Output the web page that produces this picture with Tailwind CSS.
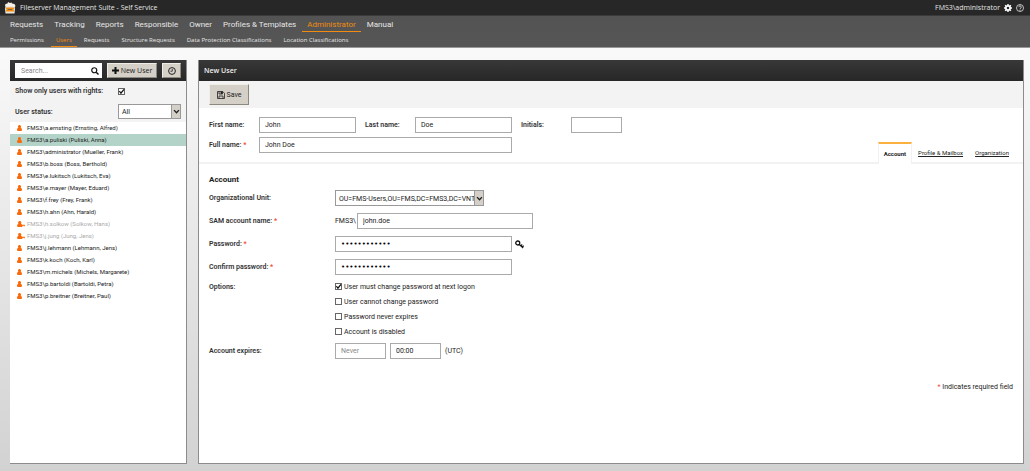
<!DOCTYPE html>
<html lang="en">
<head>
    <meta charset="UTF-8">
    <meta name="viewport" content="width=device-width, initial-scale=1.0">
    <title>Fileserver Management Suite - Self Service</title>
    <script src="https://cdn.jsdelivr.net/npm/@tailwindcss/browser@4"></script>
</head>
<body class="min-h-screen flex flex-col bg-linear-to-b from-[#fefefe] to-[#d2d2d2] font-[Roboto,'Open_Sans',sans-serif] text-[7px] leading-[12px] text-[#222]">

    <!-- Icons -->
    <svg class="hidden">
        <symbol id="ic-user" viewBox="0 0 12 14">
            <path d="M6 0a3.600 3.600 0 0 1 2.800 6C10.800 7 12 9 12 12c0 1.200-.6 2-1.800 2H1.800C.6 14 0 13.200 0 12c0-3 1.200-5 3.200-6A3.600 3.600 0 0 1 6 0z"/>
        </symbol>
        <symbol id="ic-user-off" viewBox="0 0 18 14">
            <path d="M6 0a3.600 3.600 0 0 1 2.800 6C10 6.600 10.800 7.800 11.300 9H18v3h-2v-1h-1.500v1H13v-1h-1v3H1.800C.6 14 0 13.200 0 12c0-3 1.200-5 3.200-6A3.600 3.600 0 0 1 6 0z"/>
        </symbol>
        <symbol id="ic-check" viewBox="0 0 10 10">
            <path d="M2 4.500L4.200 7.500L8.500 2" fill="none" stroke="#111" stroke-width="1.800"/>
        </symbol>
        <symbol id="ic-chevron" viewBox="0 0 10 10">
            <path d="M1.500 3L5 6.800L8.500 3" fill="none" stroke="#222" stroke-width="2"/>
        </symbol>
    </svg>

    <header class="h-[16px] shrink-0 flex items-center justify-between bg-[#272727] border-b border-[#3a3a3a] pl-[4px] pr-[6px] font-['Open_Sans',sans-serif] text-[#e4e4e4]">
        <div class="flex items-center gap-[4px]">
            <svg class="w-[12px] h-[12px]" viewBox="0 0 24 24">
                <path d="M2 7l1-3 4-1 1-3 4 2 3-1 1 2 5 1 2 4-2 3H4z" fill="#f4f1ea"/>
                <path d="M3 9h18l1 5-1 9H3L2 14z" fill="#e9e4d8"/>
                <rect x="4" y="11" width="16" height="3" rx="1" fill="#f08a10"/>
                <path d="M4 15h16v4H4z" fill="#f08a10"/>
                <path d="M7 14h10v1.500H7z" fill="#6b4a20"/>
            </svg>
            <h1>Fileserver Management Suite - Self Service</h1>
        </div>
        <div class="flex items-center gap-[4px]">
            <span>FMS3\administrator</span>
            <button type="button" aria-label="Settings">
                <svg class="block w-[8px] h-[8px]" viewBox="0 0 16 16">
                    <circle cx="8" cy="8" r="4.300" fill="none" stroke="#fff" stroke-width="3.400"/>
                    <path d="M8 0v3M8 13v3M0 8h3M13 8h3M2.300 2.300l2 2M11.700 11.700l2 2M2.300 13.700l2-2M11.700 4.300l2-2" stroke="#fff" stroke-width="2.800"/>
                </svg>
            </button>
            <button type="button" aria-label="Help">
                <svg class="block w-[8px] h-[8px]" viewBox="0 0 16 16" fill="none" stroke="#e4e4e4">
                    <circle cx="8" cy="8" r="7" stroke-width="1.600"/>
                    <path d="M5.500 6.200a2.500 2.300 0 1 1 3.800 2C8.400 8.800 8 9.200 8 10.200M8 11.500v1.800" stroke-width="1.900"/>
                </svg>
            </button>
        </div>
    </header>

    <nav class="bg-linear-to-b from-[#535353] to-[#565656] border-b border-[#999] text-[#e6e6e6]">
        <div class="h-[16px] flex gap-px px-[5px] text-[8px] leading-[17px]">
            <a href="#" class="px-[5px]">Requests</a>
            <a href="#" class="px-[5px]">Tracking</a>
            <a href="#" class="px-[5px]">Reports</a>
            <a href="#" class="px-[5px]">Responsible</a>
            <a href="#" class="px-[5px]">Owner</a>
            <a href="#" class="px-[5px]">Profiles &amp; Templates</a>
            <a href="#" class="px-[5px] text-[#f28c0f] border-b border-[#f28c0f]">Administrator</a>
            <a href="#" class="px-[5px]">Manual</a>
        </div>
        <div class="h-[15px] flex gap-[2px] px-[5px] font-['Open_Sans',sans-serif] text-[6px] leading-[16px]">
            <a href="#" class="px-[5px]">Permissions</a>
            <a href="#" class="px-[5px] text-[#f28c0f] border-b border-[#f28c0f]">Users</a>
            <a href="#" class="px-[5px]">Requests</a>
            <a href="#" class="px-[5px]">Structure Requests</a>
            <a href="#" class="px-[5px]">Data Protection Classifications</a>
            <a href="#" class="px-[5px]">Location Classifications</a>
        </div>
    </nav>

    <div class="flex-1 flex gap-[11px] pt-[12px] pb-[7px] pl-[10px] pr-[6px]">

        <!-- User list -->
        <aside class="w-[177px] shrink-0 bg-white border-r border-b border-[#8c8c8c]">
            <div class="h-[21px] flex items-center gap-[5px] px-[5px] bg-linear-to-b from-[#383838] to-[#272727]">
                <div class="relative flex-1">
                    <input type="search" aria-label="Search" placeholder="Search..." class="block w-full h-[15px] bg-white pl-[6px] pr-[14px] appearance-none placeholder:text-[#888]">
                    <svg class="absolute right-[3px] top-[4px] w-[8px] h-[8px]" viewBox="0 0 16 16" fill="none" stroke="#111">
                        <circle cx="6.500" cy="6.500" r="5" stroke-width="2.400"/>
                        <path d="M10.500 10.500L15 15" stroke-width="3"/>
                    </svg>
                </div>
                <button type="button" class="w-[50px] h-[15px] flex items-center justify-center gap-[2px] bg-[#d4cfc7] border border-[#8d8981] border-t-[#f0ece6] border-l-[#f0ece6] font-['Open_Sans',sans-serif]">
                    <svg class="w-[7px] h-[7px]" viewBox="0 0 14 14"><path d="M5 0h4v5h5v4H9v5H5V9H0V5h5z" fill="#111"/></svg>
                    New User
                </button>
                <button type="button" aria-label="History" class="w-[19px] h-[15px] flex items-center justify-center bg-[#d4cfc7] border border-[#8d8981] border-t-[#f0ece6] border-l-[#f0ece6]">
                    <svg class="w-[8px] h-[8px]" viewBox="0 0 16 16" fill="none" stroke="#222">
                        <circle cx="8" cy="8" r="6.800" stroke-width="2"/>
                        <path d="M8.500 4v4.500H5" stroke-width="1.600"/>
                    </svg>
                </button>
            </div>
            <div class="grid grid-cols-[103px_1fr] items-center gap-y-[7px] pl-[5px] pr-[5px] pt-[4px] pb-[3px] bg-[#f3f3f3]">
                <label for="only-rights" class="font-semibold text-[#333]">Show only users with rights:</label>
                <span class="relative block w-[7px] h-[7px]">
                    <input type="checkbox" id="only-rights" checked class="peer block w-[7px] h-[7px] appearance-none bg-white border border-[#666]">
                    <svg class="absolute inset-0 w-[7px] h-[7px] pointer-events-none hidden peer-checked:block"><use href="#ic-check"/></svg>
                </span>
                <label for="status" class="font-semibold text-[#333]">User status:</label>
                <div class="relative w-[63px]">
                    <select id="status" class="block w-full h-[15px] appearance-none bg-white border border-[#999] pl-[3px]">
                        <option>All</option>
                    </select>
                    <span class="absolute right-[1px] top-[1px] w-[9px] h-[13px] flex items-center justify-center bg-[#d4cfc7] border-l border-[#999] pointer-events-none">
                        <svg class="w-[7px] h-[7px]"><use href="#ic-chevron"/></svg>
                    </span>
                </div>
            </div>
            <ul id="user-list" class="text-[6px]"></ul>
        </aside>

        <!-- New user form -->
        <main class="flex-1 min-w-0 bg-white border-x border-b border-[#8c8c8c]">
            <h2 class="h-[21px] px-[5px] leading-[22px] font-['Open_Sans',sans-serif] font-semibold text-[#eee] bg-linear-to-b from-[#383838] to-[#272727]">New User</h2>
            <div class="h-[27px] px-[10px] pt-[3px] bg-[#f3f3f3]">
                <button type="submit" form="user-form" class="w-[40px] h-[21px] flex items-center justify-center gap-[2px] bg-[#d4cfc7] border border-[#8d8981] border-t-[#f0ece6] border-l-[#f0ece6]">
                    <svg class="w-[8px] h-[8px]" viewBox="0 0 16 16" fill="none" stroke="#222" stroke-width="1.600">
                        <path d="M1 1h10.500L15 4.500V15H1z"/>
                        <path d="M4 1v5h7V1M4 15v-5h8v5"/>
                        <path d="M8 2h2v3H8z" fill="#222"/>
                    </svg>
                    Save
                </button>
            </div>

            <form id="user-form" onsubmit="return false">
                <div class="flex">
                    <div class="grow pl-[10px] pt-[9px] pb-[9px] border-b-2 border-[#f2f2f2]">
                        <div class="grid grid-cols-[50px_97px_49px_97px_50px_51px] items-center gap-y-[4px]">
                            <label for="first" class="font-semibold text-[#333]">First name:</label>
                            <input id="first" type="text" value="John" class="w-full h-[16px] border border-[#aaa] px-[5px]">
                            <label for="last" class="font-semibold text-[#333] pl-[9px]">Last name:</label>
                            <input id="last" type="text" value="Doe" class="ml-[10px] w-[97px] h-[16px] border border-[#aaa] px-[5px]">
                            <label for="initials" class="font-semibold text-[#333] pl-[19px]">Initials:</label>
                            <input id="initials" type="text" class="ml-[19px] w-[51px] h-[16px] border border-[#aaa] px-[5px]">
                            <label for="full" class="font-semibold text-[#333]">Full name: <span class="text-[#f04a32]">*</span></label>
                            <input id="full" type="text" value="John Doe" class="col-span-5 w-[253px] h-[16px] border border-[#aaa] px-[5px]">
                        </div>
                    </div>
                    <div class="flex items-end text-[6px]">
                        <a href="#" class="h-[22px] px-[5px] border-t-2 border-t-[#fbb040] border-x border-x-[#f2f2f2] font-bold leading-[20px]">Account</a>
                        <div class="h-[22px] flex gap-[12px] pl-[6px] pr-[14px] leading-[22px] border-b-2 border-[#f2f2f2]">
                            <a href="#" class="underline">Profile &amp; Mailbox</a>
                            <a href="#" class="underline">Organization</a>
                        </div>
                    </div>
                </div>

                <div class="px-[10px] pt-[10px]">
                    <h3 class="font-bold text-[8px]">Account</h3>
                    <div class="grid grid-cols-[126px_1fr] gap-y-[7px] pt-[4px] leading-[16px]">
                        <label for="ou" class="font-semibold text-[#333]">Organizational Unit:</label>
                        <div class="relative w-[149px]">
                            <select id="ou" class="block w-full h-[16px] appearance-none bg-white border border-[#999] pl-[3px] pr-[9px]">
                                <option>OU=FMS-Users,OU=FMS,DC=FMS3,DC=VNT</option>
                            </select>
                            <span class="absolute right-[1px] top-[1px] w-[9px] h-[14px] flex items-center justify-center bg-[#d4cfc7] border-l border-[#999] pointer-events-none">
                                <svg class="w-[7px] h-[7px]"><use href="#ic-chevron"/></svg>
                            </span>
                        </div>

                        <label for="sam" class="font-semibold text-[#333]">SAM account name: <span class="text-[#f04a32]">*</span></label>
                        <div class="flex">
                            <span class="w-[22px]">FMS3\</span>
                            <input id="sam" type="text" value="john.doe" class="w-[176px] h-[16px] border border-[#aaa] px-[5px]">
                        </div>

                        <label for="pw" class="font-semibold text-[#333]">Password: <span class="text-[#f04a32]">*</span></label>
                        <div class="flex items-center gap-[3px]">
                            <input id="pw" type="password" value="abcdefghijkl" class="w-[177px] h-[16px] border border-[#aaa] px-[5px] font-['DejaVu_Sans',sans-serif] text-black">
                            <button type="button" aria-label="Generate password">
                                <svg class="block w-[9px] h-[9px]" viewBox="0 0 18 18" fill="none" stroke="#111">
                                    <circle cx="5.500" cy="6" r="4" stroke-width="2.600"/>
                                    <path d="M8.500 9l8 7M11.500 12l3-3M14.500 14.500l3-3" stroke-width="2.400"/>
                                </svg>
                            </button>
                        </div>

                        <label for="pw2" class="font-semibold text-[#333]">Confirm password: <span class="text-[#f04a32]">*</span></label>
                        <input id="pw2" type="password" value="abcdefghijkl" class="w-[177px] h-[16px] border border-[#aaa] px-[5px] font-['DejaVu_Sans',sans-serif] text-black">
                    </div>

                    <div class="grid grid-cols-[126px_1fr] gap-y-[4px] pt-[4px] leading-[16px]">
                        <span class="font-semibold text-[#333]">Options:</span>
                        <div id="options"></div>
                        <label for="expires" class="font-semibold text-[#333]">Account expires:</label>
                        <div class="flex gap-[4px]">
                            <input id="expires" type="text" placeholder="Never" class="w-[51px] h-[16px] border border-[#aaa] px-[5px] placeholder:text-[#888]">
                            <input type="text" aria-label="Expiry time" value="00:00" class="w-[51px] h-[16px] border border-[#aaa] px-[5px]">
                            <span>(UTC)</span>
                        </div>
                    </div>
                    <p class="pt-[22px] text-right"><span class="text-[#f04a32]">*</span> Indicates required field</p>
                </div>
            </form>
        </main>
    </div>

    <script>
        // name, state ('sel' = selected, 'off' = disabled account)
        const users = [
            ['FMS3\\a.ernsting (Ernsting, Alfred)'],
            ['FMS3\\a.puliski (Puliski, Anna)', 'sel'],
            ['FMS3\\administrator (Mueller, Frank)'],
            ['FMS3\\b.boss (Boss, Berthold)'],
            ['FMS3\\e.lukitsch (Lukitsch, Eva)'],
            ['FMS3\\e.mayer (Mayer, Eduard)'],
            ['FMS3\\f.frey (Frey, Frank)'],
            ['FMS3\\h.ahn (Ahn, Harald)'],
            ['FMS3\\h.solkow (Solkow, Hans)', 'off'],
            ['FMS3\\j.jung (Jung, Jens)', 'off'],
            ['FMS3\\j.lehmann (Lehmann, Jens)'],
            ['FMS3\\k.koch (Koch, Karl)'],
            ['FMS3\\m.michels (Michels, Margarete)'],
            ['FMS3\\p.bartoldi (Bartoldi, Petra)'],
            ['FMS3\\p.breitner (Breitner, Paul)']
        ];
        const rowClass = { sel: 'bg-[#b4d3c8]', off: 'text-[#aaa]' };
        document.getElementById('user-list').innerHTML = users.map(([name, state]) => `
            <li class="h-[12px] flex items-center pl-[7px] ${rowClass[state] || ''}">
                <span class="w-[10px]"><svg class="block h-[6px] ${state === 'off' ? 'w-[8px]' : 'w-[5px]'} fill-[#f96a0c]"><use href="${state === 'off' ? '#ic-user-off' : '#ic-user'}"/></svg></span>
                ${name}
            </li>`).join('');

        const options = [
            ['User must change password at next logon', true],
            ['User cannot change password', false],
            ['Password never expires', false],
            ['Account is disabled', false]
        ];
        document.getElementById('options').innerHTML = options.map(([text, checked]) => `
            <label class="h-[15px] flex items-center gap-[2px]">
                <span class="relative block w-[7px] h-[7px]">
                    <input type="checkbox" ${checked ? 'checked' : ''} class="peer block w-[7px] h-[7px] appearance-none bg-white border border-[#666]">
                    <svg class="absolute inset-0 w-[7px] h-[7px] pointer-events-none hidden peer-checked:block"><use href="#ic-check"/></svg>
                </span>
                ${text}
            </label>`).join('');
    </script>
</body>
</html>
